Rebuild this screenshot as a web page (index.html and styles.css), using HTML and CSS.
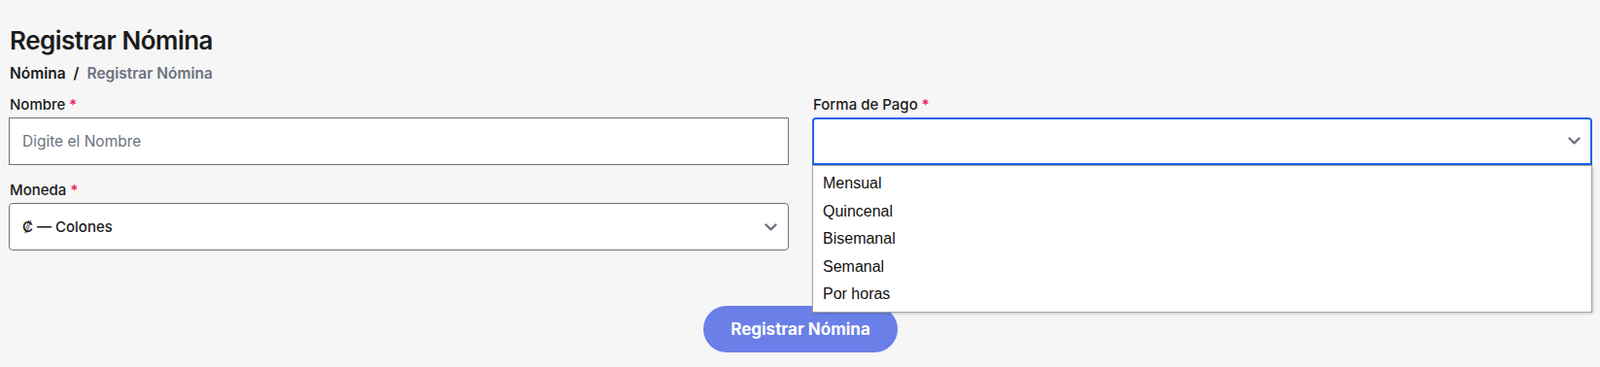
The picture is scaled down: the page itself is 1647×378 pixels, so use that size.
FILE: index.html
```html
<!DOCTYPE html>
<html lang="es">
<head>
<meta charset="utf-8">
<title>Registrar Nómina</title>
<link rel="stylesheet" href="styles.css">
</head>
<body>

<div class="page">
<!-- encabezado -->
<h1 class="page-title">Registrar Nómina</h1>
<div class="breadcrumb">
<span class="crumb">Nómina</span>
<span class="crumb-sep">/</span>
<span class="crumb current">Registrar Nómina</span>
</div>

<!-- formulario -->
<form class="form-grid">
<div class="field">
<label class="field-label">Nombre <span class="req">*</span></label>
<input class="field-input" type="text" placeholder="Digite el Nombre">
</div>

<div class="field">
<label class="field-label">Forma de Pago <span class="req">*</span></label>
<div class="select-box focused">
<span class="select-value"></span>
<svg class="chevron" width="13" height="8" viewBox="0 0 13 8"><path d="M1.5 1.5 L6.5 6.3 L11.5 1.5" fill="none" stroke="#6b7280" stroke-width="2.4" stroke-linecap="round" stroke-linejoin="round"/></svg>
<ul class="select-menu">
<li>Mensual</li>
<li>Quincenal</li>
<li>Bisemanal</li>
<li>Semanal</li>
<li>Por horas</li>
</ul>
</div>
</div>

<div class="field">
<label class="field-label">Moneda <span class="req">*</span></label>
<div class="select-box rounded">
<span class="select-value">₡ — Colones</span>
<svg class="chevron" width="13" height="8" viewBox="0 0 13 8"><path d="M1.5 1.5 L6.5 6.3 L11.5 1.5" fill="none" stroke="#6b7280" stroke-width="2.4" stroke-linecap="round" stroke-linejoin="round"/></svg>
</div>
</div>
</form>

<div class="actions">
<button type="button" class="submit-btn">Registrar Nómina</button>
</div>
</div>

</body>
</html>
```

FILE: styles.css
```css
:root {
--text: #1b1b1b;
--muted: #6b7280;
--border: #6b7280;
--focus: #1f63e8;
--req: #f0145a;
--primary: #6a7fe8;
--bg: #f6f6f6;
}

* {
margin: 0;
padding: 0;
box-sizing: border-box;
}

body {
background: var(--bg);
font-family: 'Inter', 'Noto Sans', sans-serif;
color: var(--text);
}

.page {
width: 1639px;
padding: 26px 0 0 9px;
}

/* encabezado */
.page-title {
font-size: 26px;
font-weight: 600;
line-height: 32px;
letter-spacing: -0.5px;
padding-left: 1px;
}

.breadcrumb {
display: flex;
gap: 8px;
font-size: 15.5px;
font-weight: 600;
line-height: 20px;
margin-top: 8px;
padding-left: 1px;
}

.crumb.current {
color: var(--muted);
}

/* formulario */
.form-grid {
display: grid;
grid-template-columns: 1fr 1fr;
column-gap: 24px;
row-gap: 17px;
margin-top: 12.5px;
}

.field-label {
display: block;
font-size: 15px;
font-weight: 500;
line-height: 18px;
margin-bottom: 4px;
padding-left: 1px;
}

.req {
color: var(--req);
}

.field-input {
display: block;
width: 100%;
height: 49.5px;
border: 1px solid var(--border);
background: white;
padding: 0 13px;
font-family: inherit;
font-size: 15.5px;
color: var(--text);
outline: none;
}

.field-input::placeholder {
color: var(--muted);
}

.select-box {
position: relative;
height: 49px;
border: 1px solid var(--border);
background: white;
display: flex;
align-items: center;
justify-content: space-between;
padding: 0 11px 0 13px;
font-size: 15px;
font-weight: 500;
}

.select-box.rounded {
border-radius: 4px;
}

.select-box.focused {
height: 49.5px;
border: 2px solid var(--focus);
border-radius: 4px 4px 0 0;
padding: 0 10px 0 12px;
}

.chevron {
flex-shrink: 0;
}

/* lista desplegable */
.select-menu {
position: absolute;
top: 47.5px;
left: -2px;
right: -2px;
list-style: none;
background: white;
border: 1px solid #a3a3a3;
box-shadow: 1px 1px 3px rgba(0, 0, 0, 0.2);
padding: 4px 0 3px;
font-family: 'Liberation Sans', Arial, sans-serif;
font-size: 16px;
font-weight: 400;
color: #111;
z-index: 10;
}

.select-menu li {
padding: 0 10px;
line-height: 28.6px;
}

/* botón */
.actions {
display: flex;
justify-content: center;
margin-top: 56.7px;
}

.submit-btn {
background: var(--primary);
color: white;
border: none;
width: 200px;
height: 48.5px;
border-radius: 24px;
font-family: inherit;
font-size: 17px;
font-weight: 700;
cursor: pointer;
}
```
